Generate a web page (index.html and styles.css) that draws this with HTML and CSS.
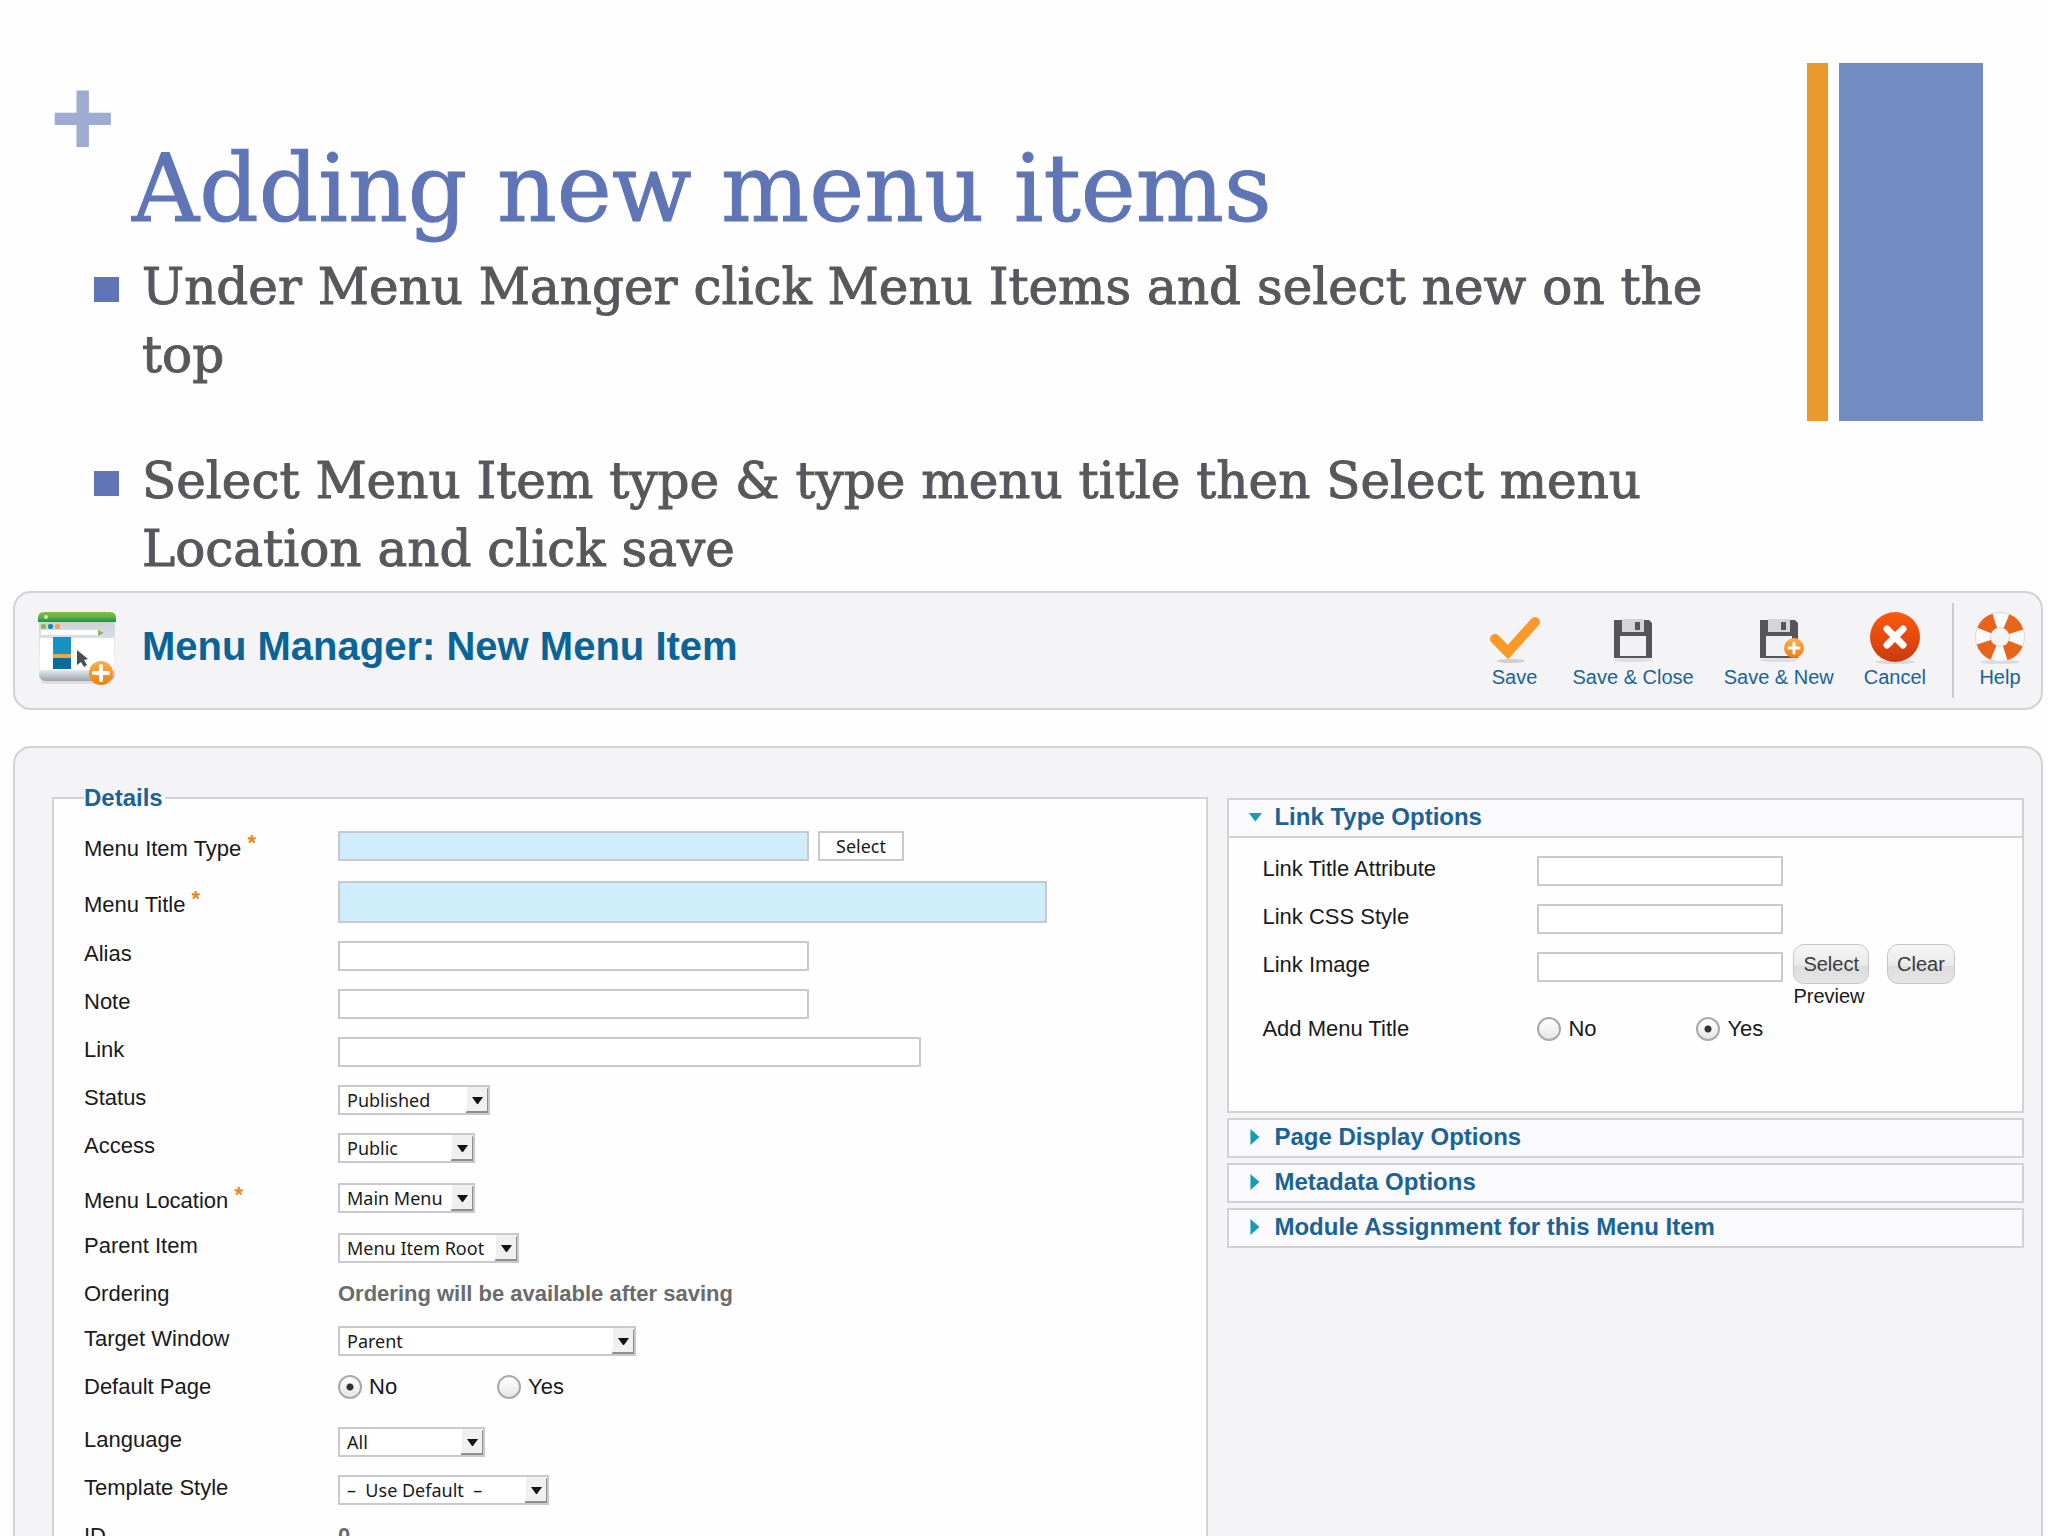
FILE: index.html
```html
<!DOCTYPE html>
<html lang="en">
<head>
    <meta charset="UTF-8">
    <meta name="viewport" content="width=device-width, initial-scale=1.0">
    <title>Adding new menu items</title>
    <link rel="stylesheet" href="styles.css">
</head>
<body>
    <header class="slide-header">
        <span class="plus">+</span>
        <div class="slide-text">
            <h1>Adding new menu items</h1>
            <ul class="bullets">
                <li>Under Menu Manger click Menu Items and select new on the top</li>
                <li>Select Menu Item type &amp; type menu title then Select menu Location and click save</li>
            </ul>
        </div>
        <div class="accent">
            <span class="accent-orange"></span>
            <span class="accent-blue"></span>
        </div>
    </header>

    <main>
        <section class="toolbar">
            <svg class="page-icon" viewBox="0 0 78 78" aria-hidden="true">
                <defs>
                    <linearGradient id="chrome" x1="0" y1="0" x2="0" y2="1">
                        <stop offset="0" stop-color="#c9d0d6"/>
                        <stop offset="0.35" stop-color="#dfe3e7"/>
                        <stop offset="0.8" stop-color="#eef1f4"/>
                        <stop offset="1" stop-color="#98a4ae"/>
                    </linearGradient>
                    <linearGradient id="green" x1="0" y1="0" x2="0" y2="1">
                        <stop offset="0" stop-color="#86bd45"/>
                        <stop offset="0.5" stop-color="#5fb044"/>
                        <stop offset="1" stop-color="#159447"/>
                    </linearGradient>
                    <linearGradient id="orange" x1="0" y1="0" x2="0" y2="1">
                        <stop offset="0" stop-color="#fbb04c"/>
                        <stop offset="1" stop-color="#f47d0c"/>
                    </linearGradient>
                </defs>
                <rect x="3" y="66" width="70" height="6" rx="3" fill="#dcdce0"/>
                <path d="M1 8h76v54q0 7-7 7H8q-7 0-7-7z" fill="url(#chrome)"/>
                <path d="M0 10V6q0-6 6-6h66q6 0 6 6v4z" fill="url(#green)"/>
                <circle cx="8" cy="5" r="2" fill="#d6eda9"/>
                <rect x="3" y="12" width="5" height="5" rx="2" fill="#8db656"/>
                <rect x="10" y="12" width="5" height="5" rx="2" fill="#1886c0"/>
                <rect x="17" y="12" width="5" height="5" rx="2" fill="#f4a24a"/>
                <rect x="3" y="18" width="57" height="5" fill="#ffffff"/>
                <path d="M60 18l6 3-6 3z" fill="#8db656"/>
                <path d="M2 26h74v32H2z" fill="#ffffff"/>
                <path d="M15 25h18v17H15z" fill="#1492c4"/>
                <path d="M15 42h18v4H15z" fill="#e9a94a"/>
                <path d="M15 46h18v11H15z" fill="#0b6a97"/>
                <path d="M39 38v15l4-3 3 5 3-2-3-5 4-1z" fill="#4a4d52"/>
                <circle cx="63" cy="61" r="12" fill="url(#orange)"/>
                <path d="M63 54v14M56 61h14" stroke="#ffffff" stroke-width="4" stroke-linecap="round"/>
            </svg>
            <h2>Menu Manager: New Menu Item</h2>
            <nav>
                <ul>
                    <li><a href="#">
                        <svg viewBox="0 0 52 52" aria-hidden="true">
                            <ellipse cx="22" cy="49" rx="14" ry="2" fill="#cfcfd2"/>
                            <path d="M6 27l13 13L46 10" fill="none" stroke="#fb9a28" stroke-width="10" stroke-linecap="round"/>
                        </svg>
                        Save</a></li>
                    <li><a href="#">
                        <svg viewBox="0 0 52 52" aria-hidden="true">
                            <ellipse cx="26" cy="48" rx="19" ry="2" fill="#dedee2"/>
                            <path d="M7 8h35l3 3v35H7z" fill="#55555a"/>
                            <path d="M15 7h22v13H15z" fill="#d4d5d8"/>
                            <path d="M28 10h5v8h-5z" fill="#55555a"/>
                            <path d="M13 24h26v20H13z" fill="#f2f2f4"/>
                        </svg>
                        Save &amp; Close</a></li>
                    <li><a href="#">
                        <svg viewBox="0 0 52 52" aria-hidden="true">
                            <ellipse cx="26" cy="48" rx="19" ry="2" fill="#dedee2"/>
                            <path d="M7 8h35l3 3v35H7z" fill="#55555a"/>
                            <path d="M15 7h22v13H15z" fill="#d4d5d8"/>
                            <path d="M28 10h5v8h-5z" fill="#55555a"/>
                            <path d="M13 24h26v20H13z" fill="#f2f2f4"/>
                            <circle cx="41" cy="36" r="10" fill="url(#orange)"/>
                            <path d="M41 31v10M36 36h10" stroke="#ffffff" stroke-width="3" stroke-linecap="round"/>
                        </svg>
                        Save &amp; New</a></li>
                    <li><a href="#">
                        <svg viewBox="0 0 52 52" aria-hidden="true">
                            <defs>
                                <linearGradient id="red" x1="0" y1="0" x2="0" y2="1">
                                    <stop offset="0" stop-color="#ff5a0a"/>
                                    <stop offset="1" stop-color="#c93a12"/>
                                </linearGradient>
                            </defs>
                            <ellipse cx="26" cy="50" rx="20" ry="2" fill="#d8d8dc"/>
                            <circle cx="26" cy="25" r="25" fill="url(#red)"/>
                            <path d="M18 17l16 16M34 17L18 33" stroke="#ffffff" stroke-width="7" stroke-linecap="round"/>
                        </svg>
                        Cancel</a></li>
                    <li class="divider"><a href="#">
                        <svg viewBox="0 0 52 52" aria-hidden="true">
                            <ellipse cx="26" cy="50" rx="20" ry="2" fill="#dcdce0"/>
                            <circle cx="26" cy="25" r="17" fill="none" stroke="#d9d9dc" stroke-width="16"/>
                            <circle cx="26" cy="25" r="17" fill="none" stroke="#fbfbfb" stroke-width="14"/>
                            <circle cx="26" cy="25" r="17" fill="none" stroke="#e8641b" stroke-width="15" pathLength="80" stroke-dasharray="11 9" stroke-dashoffset="-5"/>
                        </svg>
                        Help</a></li>
                </ul>
            </nav>
        </section>

        <form class="editor">
            <fieldset class="details">
                <legend>Details</legend>
                <div class="row required">
                    <label for="type">Menu Item Type <sup>*</sup></label>
                    <input type="text" id="type" class="medium filled">
                    <button type="button" class="plain">Select</button>
                </div>
                <div class="row required">
                    <label for="title">Menu Title <sup>*</sup></label>
                    <input type="text" id="title" class="large filled">
                </div>
                <div class="row">
                    <label for="alias">Alias</label>
                    <input type="text" id="alias" class="medium">
                </div>
                <div class="row">
                    <label for="note">Note</label>
                    <input type="text" id="note" class="medium">
                </div>
                <div class="row">
                    <label for="link">Link</label>
                    <input type="text" id="link" class="wide">
                </div>
                <div class="row">
                    <label for="status">Status</label>
                    <select id="status" class="w-status"><option>Published</option></select>
                </div>
                <div class="row">
                    <label for="access">Access</label>
                    <select id="access" class="w-access"><option>Public</option></select>
                </div>
                <div class="row required">
                    <label for="location">Menu Location <sup>*</sup></label>
                    <select id="location" class="w-access"><option>Main Menu</option></select>
                </div>
                <div class="row">
                    <label for="parent">Parent Item</label>
                    <select id="parent" class="w-parent"><option>Menu Item Root</option></select>
                </div>
                <div class="row text-row">
                    <span class="label">Ordering</span>
                    <span class="readonly">Ordering will be available after saving</span>
                </div>
                <div class="row">
                    <label for="target">Target Window</label>
                    <select id="target" class="w-target"><option>Parent</option></select>
                </div>
                <div class="row radio-row">
                    <span class="label">Default Page</span>
                    <label class="choice"><input type="radio" name="home" checked>No</label>
                    <label class="choice"><input type="radio" name="home">Yes</label>
                </div>
                <div class="row">
                    <label for="language">Language</label>
                    <select id="language" class="w-language"><option>All</option></select>
                </div>
                <div class="row">
                    <label for="template">Template Style</label>
                    <select id="template" class="w-template"><option>–&nbsp; Use Default&nbsp; –</option></select>
                </div>
                <div class="row text-row">
                    <span class="label">ID</span>
                    <span class="readonly">0</span>
                </div>
            </fieldset>

            <aside class="options">
                <section class="panel">
                    <h3><button type="button" class="open">Link Type Options</button></h3>
                    <div class="panel-body">
                        <div class="row">
                            <label for="link-title">Link Title Attribute</label>
                            <input type="text" id="link-title" class="small">
                        </div>
                        <div class="row">
                            <label for="link-css">Link CSS Style</label>
                            <input type="text" id="link-css" class="small">
                        </div>
                        <div class="row image-row">
                            <label for="link-image">Link Image</label>
                            <input type="text" id="link-image" class="small">
                            <div class="image-tools">
                                <div class="image-buttons">
                                    <button type="button" class="pill">Select</button>
                                    <button type="button" class="pill">Clear</button>
                                </div>
                                <span>Preview</span>
                            </div>
                        </div>
                        <div class="row radio-row">
                            <span class="label">Add Menu Title</span>
                            <label class="choice"><input type="radio" name="menu-text">No</label>
                            <label class="choice"><input type="radio" name="menu-text" checked>Yes</label>
                        </div>
                    </div>
                </section>
                <section class="panel">
                    <h3><button type="button">Page Display Options</button></h3>
                </section>
                <section class="panel">
                    <h3><button type="button">Metadata Options</button></h3>
                </section>
                <section class="panel">
                    <h3><button type="button">Module Assignment for this Menu Item</button></h3>
                </section>
            </aside>
        </form>
    </main>
</body>
</html>
```
FILE: styles.css
```css
* {
    box-sizing: border-box;
}

html {
    height: 100%;
    overflow: hidden;
}

body {
    height: 100%;
    margin: 0;
    overflow: hidden;
    background-color: #fefefe;
    color: #1a1a1a;
    font-family: "Liberation Sans", Arial, sans-serif;
    font-size: 22px;
    line-height: 26px;
}

h1, h2, h3, ul {
    margin: 0;
    padding: 0;
    font-weight: normal;
}

ul {
    list-style: none;
}

/* Slide heading */
.slide-header {
    display: flex;
    align-items: flex-start;
    padding: 63px 65px 0 50px;
    height: 591px;
    font-family: "DejaVu Serif", Rockwell, serif;
}

.plus {
    width: 44px;
    margin-top: 5px;
    color: #a0abd3;
    font-family: "Liberation Sans", Arial, sans-serif;
    font-size: 112px;
    font-weight: bold;
    line-height: 100px;
}

.slide-text {
    flex: 1;
    padding: 70px 60px 0 0;
    -webkit-text-stroke: 1px currentColor;
}

h1 {
    padding-left: 38px;
    color: #6075b5;
    font-size: 93px;
    line-height: 112px;
}

.bullets {
    display: flex;
    flex-direction: column;
    gap: 58px;
    padding-top: 8px;
}

.bullets li {
    display: flex;
    gap: 23px;
    color: #58585c;
    font-size: 50px;
    line-height: 68px;
}

.bullets li::before {
    content: "";
    flex: none;
    width: 25px;
    height: 25px;
    margin-top: 24px;
    background-color: #6075b5;
}

.accent {
    display: flex;
    gap: 11px;
    height: 358px;
}

.accent-orange {
    width: 21px;
    background-color: #e9982b;
}

.accent-blue {
    width: 144px;
    background-color: #728cc1;
}

main {
    display: flex;
    flex-direction: column;
    gap: 36px;
    padding: 0 5px 0 13px;
}

/* Toolbar */
.toolbar {
    display: flex;
    align-items: center;
    height: 119px;
    padding: 0 13px 0 23px;
    background-color: #f4f3f5;
    border: 2px solid #d2d1d4;
    border-radius: 18px;
}

.page-icon {
    width: 78px;
    height: 78px;
}

.toolbar h2 {
    flex: 1;
    padding: 0 0 10px 26px;
    color: #0b6496;
    font-size: 40px;
    font-weight: bold;
    line-height: 46px;
}

.toolbar ul {
    display: flex;
    gap: 30px;
}

.toolbar li a {
    display: flex;
    flex-direction: column;
    align-items: center;
    gap: 1px;
    min-width: 56px;
    padding: 9px 0;
    color: #1b6394;
    font-size: 20px;
    line-height: 24px;
    text-decoration: none;
}

.toolbar li svg {
    width: 52px;
    height: 52px;
}

.toolbar .divider {
    margin-left: -4px;
    padding-left: 18px;
    border-left: 2px solid #cccbce;
}

/* Edit form */
.editor {
    display: grid;
    grid-template-columns: 1157fr 797fr;
    gap: 19px;
    padding: 50px 17px 60px 37px;
    background-color: #f4f3f6;
    border: 2px solid #d2d1d4;
    border-radius: 18px;
}

.details {
    min-width: 0;
    margin: -13px 0 0;
    padding: 18px 30px;
    border: 2px solid #d2d1d4;
    background-color: #fefefe;
}

legend {
    padding: 0 2px 0 0;
    color: #1b6394;
    font-size: 24px;
    font-weight: bold;
}

.row {
    display: flex;
    align-items: flex-start;
    margin-bottom: 18px;
}

.row > label:first-child,
.row > .label {
    flex: none;
    width: 254px;
}

.required {
    align-items: center;
    min-height: 34px;
}

.required > label:first-child {
    padding-top: 6px;
}

sup {
    color: #f58220;
    font-size: 22px;
    font-weight: bold;
    line-height: 0;
    vertical-align: 6px;
}

input[type="text"] {
    height: 30px;
    margin: 0;
    padding: 2px 6px;
    background-color: #ffffff;
    border: 2px solid #c9c8cc;
    border-radius: 0;
    font-size: 20px;
}

input.filled {
    background-color: #d0edfc;
}

input.small {
    width: 246px;
}

input.medium {
    width: 471px;
}

input.wide {
    width: 583px;
}

input.large {
    width: 709px;
    height: 42px;
}

select,
.plain {
    height: 30px;
    margin: 0;
    color: #1a1a1a;
    background-color: #ffffff;
    border: 2px solid #c9c8cc;
    border-radius: 0;
    font-family: "Noto Sans", "Lucida Grande", sans-serif;
    font-size: 18px;
    line-height: 24px;
}

.plain {
    width: 86px;
    margin-left: 9px;
    padding: 0;
}

select {
    appearance: none;
    padding: 0 7px;
    background-image: url("data:image/svg+xml,%3Csvg xmlns='http://www.w3.org/2000/svg' width='26' height='30'%3E%3Cpath d='M3 2h20v25H0l3-4z' fill='%23f0f0f1'/%3E%3Cpath d='M23 4l3-4v30H0l3-4h20z' fill='%238e8e90'/%3E%3Cpath d='M8 12h11l-5 7h-1z' fill='%23111111'/%3E%3C/svg%3E");
    background-origin: border-box;
    background-position: right bottom;
    background-repeat: no-repeat;
}

.w-status {
    width: 152px;
}

.w-access {
    width: 137px;
}

.w-language {
    width: 147px;
}

.w-parent {
    width: 181px;
}

.w-template {
    width: 211px;
}

.w-target {
    width: 298px;
}

.text-row {
    min-height: 27px;
}

.readonly {
    color: #6b6b6e;
    font-weight: bold;
}

.radio-row {
    min-height: 35px;
}

.choice {
    display: flex;
    align-items: center;
    gap: 7px;
    width: 159px;
}

input[type="radio"] {
    appearance: none;
    width: 24px;
    height: 24px;
    margin: 0;
    border: 2px solid #a9a9ad;
    border-radius: 50%;
    background: linear-gradient(#ffffff, #e6e6e8);
}

input[type="radio"]:checked {
    background: radial-gradient(circle, #333333 3px, transparent 4px), linear-gradient(#ffffff, #e6e6e8);
}

/* Option panels */
.options {
    display: flex;
    flex-direction: column;
    gap: 5px;
}

.panel {
    background-color: #fefefe;
    border: 2px solid #d2d1d4;
}

.panel h3 button {
    display: flex;
    align-items: center;
    gap: 12px;
    width: 100%;
    height: 36px;
    padding: 0 19px 2px;
    background-color: #faf9fb;
    border: none;
    color: #1b6394;
    font-family: inherit;
    font-size: 24px;
    font-weight: bold;
}

.panel h3 button::before {
    content: "";
    width: 14px;
    height: 16px;
    background-color: #189ab8;
    clip-path: polygon(2px 0, 11px 50%, 2px 100%);
}

.panel h3 button.open::before {
    height: 9px;
    clip-path: polygon(0 0, 100% 0, 50% 100%);
}

.panel-body {
    min-height: 275px;
    padding: 18px 33px 0;
    border-top: 2px solid #d2d1d4;
}

.panel-body .row > label:first-child,
.panel-body .row > .label {
    width: 275px;
}

.image-row {
    margin-bottom: 8px;
}

.image-tools {
    margin: -8px 0 0 10px;
    font-size: 20px;
    line-height: 24px;
}

.image-buttons {
    display: flex;
    gap: 18px;
}

.pill {
    height: 40px;
    padding: 0 9px;
    background: linear-gradient(#f6f6f7, #e9e9ea 55%, #dcdcde 56%, #e6e6e8);
    border: 1px solid #c6c5c8;
    border-radius: 11px;
    color: #3a3a3c;
    font-family: inherit;
    font-size: 20px;
}
```
